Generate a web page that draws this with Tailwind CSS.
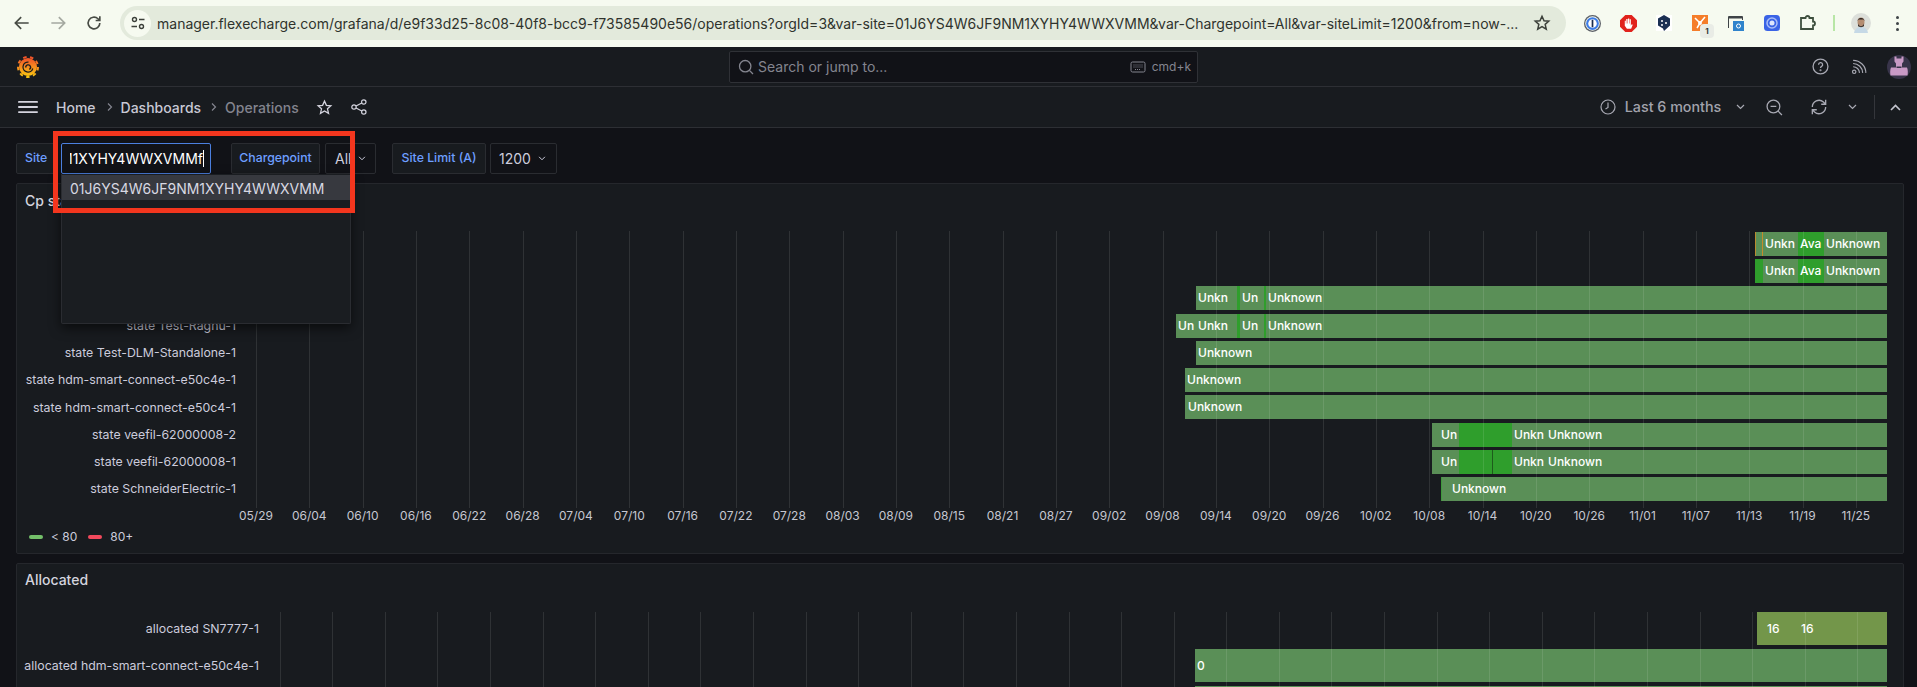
<!DOCTYPE html>
<html lang="en">
<head>
    <meta charset="UTF-8">
    <title>Operations - Dashboards - Grafana</title>
    <script src="https://cdn.jsdelivr.net/npm/@tailwindcss/browser@4"></script>
</head>
<body class="bg-[#111217] font-['Inter',sans-serif] text-[#ccccdc]">
<div class="relative h-[687px] w-[1917px] overflow-hidden">

    <!-- browser toolbar -->
    <div class="flex h-[47px] items-center bg-[#f6faf0] pb-[1px] pl-[4px] text-[#474b44]">
        <div class="flex w-9 justify-center">
            <svg class="h-5 w-5" viewBox="0 0 24 24" fill="none" stroke="currentColor" stroke-width="2"><path d="M20 12H5M11 5l-7 7 7 7"/></svg>
        </div>
        <div class="flex w-9 justify-center text-[#a4a8a0]">
            <svg class="h-5 w-5" viewBox="0 0 24 24" fill="none" stroke="currentColor" stroke-width="2"><path d="M4 12h15M13 5l7 7-7 7"/></svg>
        </div>
        <div class="flex w-9 justify-center">
            <svg class="h-5 w-5" viewBox="0 0 24 24" fill="none" stroke="currentColor" stroke-width="2"><path d="M19 12a7 7 0 1 1-2.2-5.1L19 9M19 4v5h-5"/></svg>
        </div>
        <div class="ml-2 flex h-[34px] w-[1446px] items-center rounded-full bg-[#e3eadc] pl-[4px]">
            <div class="flex h-[27px] w-[27px] items-center justify-center rounded-full bg-[#f6faf0]">
                <svg class="h-4 w-4" viewBox="0 0 16 16" fill="none" stroke="#3c403a" stroke-width="1.4"><circle cx="4.5" cy="4.5" r="2"/><path d="M9 4.5h5.5M1.5 11.5H7"/><circle cx="11.5" cy="11.5" r="2"/></svg>
            </div>
            <span class="ml-[6px] w-[1361px] whitespace-nowrap text-[14px] text-[#2f332d]">manager.flexecharge.com/grafana/d/e9f33d25-8c08-40f8-bcc9-f73585490e56/operations?orgId=3&amp;var-site=01J6YS4W6JF9NM1XYHY4WWXVMM&amp;var-Chargepoint=All&amp;var-siteLimit=1200&amp;from=now-...</span>
            <svg class="ml-[15px] h-[18px] w-[18px]" viewBox="0 0 24 24" fill="none" stroke="#3c403a" stroke-width="2"><path d="M12 3l2.7 6 6.3.6-4.8 4.2 1.5 6.4L12 16.8l-5.7 3.4 1.5-6.4L3 9.6 9.3 9z"/></svg>
        </div>
        <div class="ml-2 flex w-9 justify-center">
            <svg class="h-[17px] w-[17px]" viewBox="0 0 16 16"><circle cx="8" cy="8" r="8" fill="#5b5f66"/><circle cx="8" cy="8" r="6.8" fill="#f6faf0"/><circle cx="8" cy="8" r="6" fill="#3d7de8"/><circle cx="8" cy="8" r="4" fill="#fff"/><rect x="7.2" y="4.5" width="1.6" height="7" fill="#1a2b4c"/></svg>
        </div>
        <div class="flex w-9 justify-center">
            <svg class="h-[17px] w-[17px]" viewBox="0 0 16 16"><path d="M5 0h6l5 5v6l-5 5H5l-5-5V5z" fill="#e1221c"/><path d="M4.5 8V5.5h1V8h.4V3.8h1.2V8h.4V3.3h1.2V8h.4V4h1.1v6l.8-1.4 1 .5L10.500 13H6.500L4.500 10z" fill="#fff"/></svg>
        </div>
        <div class="flex w-9 justify-center">
            <svg class="h-4 w-4 bg-white" viewBox="0 0 16 16"><path d="M8 0l6 3.500v7L8 16l-1-2.500-5-3v-7z" fill="#1a2f52"/><circle cx="6" cy="6" r="1" fill="#fff"/><circle cx="10" cy="8" r="1" fill="#fff"/><circle cx="6" cy="10" r="1" fill="#fff"/></svg>
        </div>
        <div class="relative flex w-9 justify-center">
            <svg class="h-4 w-4 bg-[#f57d2a]" viewBox="0 0 16 16" fill="none" stroke="#fff" stroke-width="1.5"><path d="M3 3l5 5M13 2L8 8l-3 5"/><circle cx="8" cy="8" r="1.200" fill="#fff"/></svg>
            <span class="absolute left-[18px] top-[9px] flex h-[14px] w-[14px] items-center justify-center rounded bg-[#e9ece6] text-[8px] font-bold text-[#333]">1</span>
        </div>
        <div class="flex w-9 justify-center">
            <svg class="h-4 w-4" viewBox="0 0 16 16"><path d="M.5 13V1.500h14V5" fill="none" stroke="#3f4347" stroke-width="1"/><rect x="1" y="2" width="13" height="1.500" fill="#3f4347"/><rect x="5" y="6" width="11" height="10" fill="#2f83cc"/><circle cx="10.500" cy="11" r="2" fill="none" stroke="#fff"/></svg>
        </div>
        <div class="flex w-9 justify-center">
            <svg class="h-4 w-4" viewBox="0 0 16 16"><rect width="16" height="16" rx="3.500" fill="#3a63e6"/><circle cx="8" cy="8" r="5" fill="none" stroke="#a9bcf6" stroke-width="1.500"/><circle cx="8" cy="8" r="2.500" fill="#dfe6fc"/></svg>
        </div>
        <div class="flex w-9 justify-center">
            <svg class="h-[18px] w-[18px]" viewBox="0 0 18 18" fill="none" stroke="#3e4f3e" stroke-width="1.800"><path d="M2 4h4.500a2 2 0 0 1 4 0H14v3.500a2 2 0 0 1 0 4V15H2v-3.500-3z"/></svg>
        </div>
        <div class="flex w-4 justify-center"><div class="h-[16px] w-[2px] bg-[#b8e6a6]"></div></div>
        <div class="flex w-[38px] justify-center">
            <svg class="h-5 w-5" viewBox="0 0 20 20"><circle cx="10" cy="10" r="10" fill="#dcdfda"/><path d="M3 20c1-5 4-6 7-6s6 1 7 6z" fill="#c6d9e6"/><ellipse cx="10" cy="9" rx="3.500" ry="4.500" fill="#b48d72"/><path d="M6.500 8c0-4 7-4 7 0l-1-1.500h-5z" fill="#2b2522"/><path d="M7 10.500c1 3.500 5 3.500 6 0v2.500c-1 1.500-5 1.500-6 0z" fill="#3a312c"/></svg>
        </div>
        <div class="flex w-[34px] flex-col items-center gap-[3px]">
            <div class="h-[3px] w-[3px] rounded-full bg-[#3f4447]"></div>
            <div class="h-[3px] w-[3px] rounded-full bg-[#3f4447]"></div>
            <div class="h-[3px] w-[3px] rounded-full bg-[#3f4447]"></div>
        </div>
    </div>

    <!-- grafana top bar -->
    <div class="flex h-[40px] items-center border-b border-[#2d2f34] bg-[#181b1f]">
        <div class="w-[729px] pl-[16px]">
            <svg class="h-6 w-6" viewBox="0 0 24 24">
                <defs><linearGradient id="gf" x1="0" y1="0" x2="0" y2="1"><stop offset="0" stop-color="#f0522a"/><stop offset="1" stop-color="#f9c512"/></linearGradient></defs>
                <circle cx="12" cy="12" r="9" fill="url(#gf)"/>
                <circle cx="12" cy="12" r="10" fill="none" stroke="url(#gf)" stroke-width="2" stroke-dasharray="3.500 3.480"/>
                <path d="M16.800 13.500a5 5 0 1 1-4.300-6.400" fill="none" stroke="#181b1f" stroke-width="1.300"/>
                <path d="M9.800 12.500a2.400 2.400 0 1 1 3.500 1.900" fill="none" stroke="#181b1f" stroke-width="1.400"/>
            </svg>
        </div>
        <div class="flex h-[32px] w-[469px] items-center rounded-[2px] border border-[#2f3136] bg-[#111217] pl-2 pr-[6px] text-[#84858f]">
            <svg class="h-4 w-4" viewBox="0 0 16 16" fill="none" stroke="currentColor" stroke-width="1.300"><circle cx="7.200" cy="7.200" r="5.700"/><path d="M11.400 11.400L15 15"/></svg>
            <span class="ml-[4px] flex-1 text-[14px]">Search or jump to...</span>
            <svg class="h-[14px] w-[16px]" viewBox="0 0 16 14" fill="none" stroke="currentColor"><rect x="1" y="2" width="14" height="10" rx="1.500"/><path d="M3.500 5h9M3.500 7h9M5 9.500h6" stroke-dasharray="1 1"/></svg>
            <span class="ml-[6px] text-[12px]">cmd+k</span>
        </div>
        <div class="flex flex-1 items-center text-[#a8a9b3]">
            <svg class="ml-[614px] h-[17px] w-[17px]" viewBox="0 0 16 16" fill="none" stroke="currentColor" stroke-width="1.200"><circle cx="8" cy="8" r="7"/><path d="M6.200 6.300a1.900 1.900 0 1 1 2.800 1.600c-.7.400-1 .8-1 1.500"/><circle cx="8" cy="11.500" r=".4"/></svg>
            <svg class="ml-[22px] h-[17px] w-[17px]" viewBox="0 0 16 16" fill="none" stroke="currentColor" stroke-width="1.100"><circle cx="3" cy="13" r="1.600"/><path d="M2 8.200A6 6 0 0 1 8 14M2 5.200A9 9 0 0 1 11 14M2 2.200A12 12 0 0 1 14 14"/></svg>
            <svg class="ml-[19px] h-6 w-6" viewBox="0 0 24 24">
                <circle cx="12" cy="12" r="12" fill="#38344a"/>
                <path d="M7.500 1.500h2v2h5v-2h2v5l-1.500 2v4H20c1 2 1 6 .5 8h-17c-.5-2-.5-6 .5-8h5V8.500L7.500 6.500z" fill="#c99ac6"/>
                <rect x="9.500" y="11.500" width="5" height="1.500" fill="#38344a"/>
            </svg>
        </div>
    </div>

    <!-- breadcrumb bar -->
    <div class="flex h-[41px] items-center border-b border-[#2d2f34] bg-[#181b1f] text-[14px] font-medium text-[#c8c8d4]">
        <svg class="ml-[18px] h-[12px] w-[20px]" viewBox="0 0 20 12" fill="#d4d4de"><rect width="20" height="1.800" rx=".9"/><rect y="5.100" width="20" height="1.800" rx=".9"/><rect y="10.200" width="20" height="1.800" rx=".9"/></svg>
        <span class="ml-[18px]">Home</span>
        <svg class="ml-[11px] h-[10px] w-[6px]" viewBox="0 0 6 10" fill="none" stroke="#84858f" stroke-width="1.200"><path d="M1 1.500L4.500 5 1 8.500"/></svg>
        <span class="ml-[8px]">Dashboards</span>
        <svg class="ml-[10px] h-[10px] w-[6px]" viewBox="0 0 6 10" fill="none" stroke="#84858f" stroke-width="1.200"><path d="M1 1.500L4.500 5 1 8.500"/></svg>
        <span class="ml-[8px] text-[#83848e]">Operations</span>
        <svg class="ml-[17px] h-[17px] w-[17px]" viewBox="0 0 24 24" fill="none" stroke="#d4d4de" stroke-width="1.800"><path d="M12 3l2.700 6 6.300.6-4.800 4.200 1.500 6.400L12 16.800l-5.700 3.400 1.500-6.400L3 9.600 9.300 9z"/></svg>
        <svg class="ml-[18px] h-[16px] w-[16px]" viewBox="0 0 16 16" fill="none" stroke="#d4d4de" stroke-width="1.200"><circle cx="3" cy="8" r="2.200"/><circle cx="12.800" cy="3" r="2.200"/><circle cx="12.800" cy="13" r="2.200"/><path d="M5 7l5.800-3M5 9l5.800 3"/></svg>

        <svg class="ml-[1233px] h-[16px] w-[16px]" viewBox="0 0 16 16" fill="none" stroke="#a8a9b3" stroke-width="1.200"><circle cx="8" cy="8" r="7"/><path d="M8 3.500V8.500L5.500 10"/></svg>
        <span class="ml-[9px] text-[14.300px] text-[#a2a3ad]">Last 6 months</span>
        <svg class="ml-[15px] h-[6px] w-[9px]" viewBox="0 0 9 6" fill="none" stroke="#a8a9b3" stroke-width="1.200"><path d="M1 1l3.500 3.500L8 1"/></svg>
        <svg class="ml-[21px] h-[17px] w-[17px]" viewBox="0 0 16 16" fill="none" stroke="#a8a9b3" stroke-width="1.200"><circle cx="7" cy="7" r="6"/><path d="M4.300 7h5.400M11.400 11.400L15 15"/></svg>
        <svg class="ml-[26px] h-[20px] w-[20px]" viewBox="0 0 18 18" fill="none" stroke="#a8a9b3" stroke-width="1.200"><path d="M3 9a6 6 0 0 1 10-4.500L15 6.500M15 2.500v4h-4M15 9a6 6 0 0 1-10 4.500L3 11.500M3 15.500v-4h4"/></svg>
        <svg class="ml-[19px] h-[6px] w-[9px]" viewBox="0 0 9 6" fill="none" stroke="#a8a9b3" stroke-width="1.200"><path d="M1 1l3.500 3.500L8 1"/></svg>
        <div class="ml-[17px] h-[24px] w-px bg-[#34363b]"></div>
        <svg class="ml-[15px] h-[7px] w-[11px]" viewBox="0 0 11 7" fill="none" stroke="#c4c5cf" stroke-width="1.600"><path d="M1 6l4.500-4.500L10 6"/></svg>
    </div>

    <!-- variables and panels -->
    <div class="flex flex-col px-[16px] pr-[13px] pt-[15px]">
        <div class="flex h-[31px] text-[12.300px] font-medium">
            <div class="flex w-[40px] items-center rounded-l-[2px] border border-[#2a2c31] bg-[#181b1f] pl-[8px] text-[#6e9fff]">Site</div>
            <div class="ml-[5px] flex w-[150px] items-center rounded-[2px] border border-[#4b7fdf] bg-[#111217] pl-[8px] pr-[6px] text-[14px] font-normal text-white">
                <div class="flex flex-1 justify-end overflow-hidden">
                    <span class="whitespace-nowrap">M1XYHY4WWXVMMf</span>
                </div>
                <span class="h-[17px] w-px shrink-0 bg-white"></span>
            </div>
            <div class="ml-[20px] flex w-[89px] items-center justify-center rounded-[2px] border border-[#2a2c31] bg-[#181b1f] text-[#6e9fff]">Chargepoint</div>
            <div class="ml-[5px] flex w-[51px] items-center rounded-[2px] border border-[#2a2c31] bg-[#111217] pl-[9px] text-[14px] font-normal">All
                <svg class="ml-[7px] h-[5px] w-[8px]" viewBox="0 0 9 6" fill="none" stroke="#ccccdc" stroke-width="1.200"><path d="M1 1l3.500 3.500L8 1"/></svg>
            </div>
            <div class="ml-[16px] flex w-[94px] items-center justify-center rounded-[2px] border border-[#2a2c31] bg-[#181b1f] text-[#6e9fff]">Site Limit (A)</div>
            <div class="ml-[4px] flex w-[67px] items-center rounded-[2px] border border-[#2a2c31] bg-[#111217] pl-[8px] text-[14px] font-normal">1200
                <svg class="ml-[7px] h-[5px] w-[8px]" viewBox="0 0 9 6" fill="none" stroke="#ccccdc" stroke-width="1.200"><path d="M1 1l3.500 3.500L8 1"/></svg>
            </div>
        </div>

        <!-- Cp state panel -->
        <div class="mt-[9px] h-[371px] rounded-[2px] border border-[#25272c] bg-[#181b1f]">
            <div class="pl-[8px] pt-[8px] text-[14px] font-medium leading-[18px] text-[#d4d4de]">Cp state</div>
            <div class="mt-[20.400px] flex">
                <div class="w-[227px] shrink-0 pr-[8px] text-right text-[12.350px]">
                    <div class="h-[27.220px] leading-[27px]">state SN7777-1</div>
                    <div class="h-[27.220px] leading-[27px]">state SN7777-2</div>
                    <div class="h-[27.220px] leading-[27px]">state Test-Raghu-2</div>
                    <div class="h-[27.220px] leading-[27px]">state Test-Raghu-1</div>
                    <div class="h-[27.220px] leading-[27px]">state Test-DLM-Standalone-1</div>
                    <div class="h-[27.220px] leading-[27px]">state hdm-smart-connect-e50c4e-1</div>
                    <div class="h-[27.220px] leading-[27px]">state hdm-smart-connect-e50c4-1</div>
                    <div class="h-[27.220px] leading-[27px]">state veefil-62000008-2</div>
                    <div class="h-[27.220px] leading-[27px]">state veefil-62000008-1</div>
                    <div class="h-[27.220px] leading-[27px]">state SchneiderElectric-1</div>
                </div>
                <div class="relative flex-1">
                    <div id="grid1" class="absolute inset-x-0 bottom-[-5px] top-[1px] flex pl-[12px]"></div>
                    <div class="flex flex-col text-[12px] font-medium text-white">
                        <div class="flex h-[27.220px] items-center pl-[1511px]">
                            <div class="flex h-[24px] w-[132px] bg-[#5a8f57] leading-[24px]">
                                <div class="w-px bg-[#b98a2e]"></div><div class="w-[5.500px]"></div><div class="w-[1.500px] bg-[#c48c2c]"></div>
                                <div class="w-[35px] pl-[2px]">Unkn</div>
                                <div class="w-[26px] bg-[#2f9e2c] pl-[2px]">Ava</div>
                                <div class="flex-1 pl-[2px]">Unknown</div>
                            </div>
                        </div>
                        <div class="flex h-[27.220px] items-center pl-[1511px]">
                            <div class="flex h-[24px] w-[132px] bg-[#5a8f57] leading-[24px]">
                                <div class="w-[8px] bg-[#2f9e2c]"></div>
                                <div class="w-[35px] pl-[2px]">Unkn</div>
                                <div class="w-[26px] bg-[#2f9e2c] pl-[2px]">Ava</div>
                                <div class="flex-1 pl-[2px]">Unknown</div>
                            </div>
                        </div>
                        <div class="flex h-[27.220px] items-center pl-[952px]">
                            <div class="flex h-[24px] flex-1 bg-[#5a8f57] leading-[24px]">
                                <div class="w-[41px] pl-[2px]">Unkn</div><div class="w-[3px] bg-[#2f9e2c]"></div>
                                <div class="w-[24px] pl-[2px]">Un</div><div class="w-[2px] bg-[#2f9e2c]"></div>
                                <div class="flex-1 pl-[2px]">Unknown</div>
                            </div>
                        </div>
                        <div class="flex h-[27.220px] items-center pl-[932px]">
                            <div class="flex h-[24px] flex-1 bg-[#5a8f57] leading-[24px]">
                                <div class="w-[20px] pl-[2px]">Un</div>
                                <div class="w-[41px] pl-[2px]">Unkn</div><div class="w-[3px] bg-[#2f9e2c]"></div>
                                <div class="w-[24px] pl-[2px]">Un</div><div class="w-[2px] bg-[#2f9e2c]"></div>
                                <div class="flex-1 pl-[2px]">Unknown</div>
                            </div>
                        </div>
                        <div class="flex h-[27.220px] items-center pl-[952px]">
                            <div class="h-[24px] flex-1 bg-[#5a8f57] pl-[2px] leading-[24px]">Unknown</div>
                        </div>
                        <div class="flex h-[27.220px] items-center pl-[941px]">
                            <div class="h-[24px] flex-1 bg-[#5a8f57] pl-[2px] leading-[24px]">Unknown</div>
                        </div>
                        <div class="flex h-[27.220px] items-center pl-[941px]">
                            <div class="h-[24px] flex-1 bg-[#5a8f57] pl-[3px] leading-[24px]">Unknown</div>
                        </div>
                        <div class="flex h-[27.220px] items-center pl-[1188px]">
                            <div class="flex h-[24px] flex-1 bg-[#5a8f57] leading-[24px]">
                                <div class="w-[27px] pl-[9px]">Un</div><div class="w-[53px] bg-[#2f9e2c]"></div>
                                <div class="w-[36px] pl-[2px]">Unkn</div>
                                <div class="flex-1">Unknown</div>
                            </div>
                        </div>
                        <div class="flex h-[27.220px] items-center pl-[1188px]">
                            <div class="flex h-[24px] flex-1 bg-[#5a8f57] leading-[24px]">
                                <div class="w-[27px] pl-[9px]">Un</div><div class="w-[33px] bg-[#2f9e2c]"></div><div class="w-px bg-[#1e5c1c]"></div><div class="w-[19px] bg-[#2f9e2c]"></div>
                                <div class="w-[36px] pl-[2px]">Unkn</div>
                                <div class="flex-1">Unknown</div>
                            </div>
                        </div>
                        <div class="flex h-[27.220px] items-center pl-[1197px]">
                            <div class="h-[24px] flex-1 border-l border-[#3f9a3c] bg-[#5a8f57] pl-[10px] leading-[24px]">Unknown</div>
                        </div>
                    </div>
                </div>
                <div class="w-[16px] shrink-0"></div>
            </div>
            <div id="axis1" class="ml-[212.300px] mt-[4px] flex h-[18px] items-center text-[12px] text-[#c6c7d1]"></div>
            <div class="ml-[12px] mt-[2px] flex items-center text-[12px] leading-[20px]">
                <div class="h-[4px] w-[14px] rounded-[2px] bg-[#73bf69]"></div><span class="ml-[8px]">&lt; 80</span>
                <div class="ml-[11px] h-[4px] w-[14px] rounded-[2px] bg-[#f2495c]"></div><span class="ml-[8px]">80+</span>
            </div>
        </div>

        <!-- Allocated panel -->
        <div class="mt-[9px] h-[200px] rounded-[2px] border border-[#25272c] bg-[#181b1f]">
            <div class="pl-[8px] pt-[7px] text-[14px] font-medium leading-[18px] text-[#d4d4de]">Allocated</div>
            <div class="mt-[23px] flex">
                <div class="w-[250px] shrink-0 pr-[8px] text-right text-[12.350px]">
                    <div class="h-[37px] leading-[33px]">allocated SN7777-1</div>
                    <div class="h-[37px] leading-[33px]">allocated hdm-smart-connect-e50c4e-1</div>
                </div>
                <div class="relative flex-1">
                    <div id="grid2" class="absolute inset-0 flex pl-[12.600px]"></div>
                    <div class="flex flex-col text-[12px] font-medium text-white">
                        <div class="h-[37px] pl-[1490px]">
                            <div class="flex h-[33px] bg-[#73964a] leading-[33px]">
                                <div class="w-[44px] pl-[10px]">16</div><div>16</div>
                            </div>
                        </div>
                        <div class="h-[37px] pl-[928px]">
                            <div class="h-[33px] bg-[#5a8f57] pl-[2px] leading-[33px]">0</div>
                        </div>
                        <div class="h-[37px] pl-[928px]">
                            <div class="h-[33px] bg-[#5a8f57]"></div>
                        </div>
                    </div>
                </div>
                <div class="w-[16px] shrink-0"></div>
            </div>
        </div>
    </div>

    <!-- open site dropdown -->
    <div class="absolute left-[61px] top-[174px] h-[150px] w-[290px] rounded-b-[2px] border border-[#2a2c31] border-t-0 bg-[#1a1d21] pt-px shadow-[0_4px_12px_rgba(0,0,0,0.6)]">
        <div class="h-[25px] bg-[#37393f] pl-[8px] text-[14px] leading-[28px] text-[#d8d8e2]">01J6YS4W6JF9NM1XYHY4WWXVMM</div>
    </div>

    <!-- red annotation -->
    <div class="absolute left-[53px] top-[131px] h-[82px] w-[302px] border-[5px] border-[#f4361e]"></div>
</div>
<script>
    var dates = ['05/29','06/04','06/10','06/16','06/22','06/28','07/04','07/10','07/16','07/22','07/28','08/03','08/09','08/15','08/21','08/27','09/02','09/08','09/14','09/20','09/26','10/02','10/08','10/14','10/20','10/26','11/01','11/07','11/13','11/19','11/25'];
    var grid1 = document.getElementById('grid1');
    var grid2 = document.getElementById('grid2');
    var axis1 = document.getElementById('axis1');
    dates.forEach(function (d) {
        var a = document.createElement('div');
        a.className = 'w-[53.330px] shrink-0 border-l border-white/10';
        grid1.appendChild(a);
        var b = document.createElement('div');
        b.className = 'w-[52.600px] shrink-0 border-l border-white/10';
        grid2.appendChild(b);
        var t = document.createElement('div');
        t.className = 'w-[53.330px] shrink-0 text-center';
        t.textContent = d;
        axis1.appendChild(t);
    });
</script>
</body>
</html>
